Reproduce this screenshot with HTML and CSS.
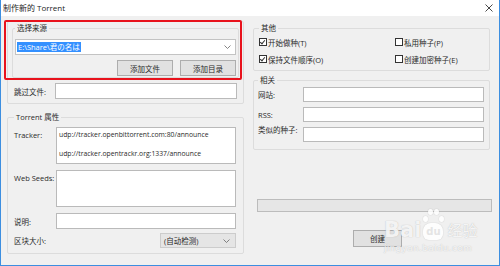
FILE: index.html
```html
<!DOCTYPE html>
<html>
<head>
    <title>制作新的 Torrent</title>
    <link rel="stylesheet" href="styles.css">
</head>
<body>
    <div class="window">
        <div class="titlebar">
            <span class="title">制作新的 Torrent</span>
            <svg class="close" width="8" height="8" viewBox="0 0 8 8"><path d="M0.5 0.5 L7.5 7.5 M7.5 0.5 L0.5 7.5" stroke="#333" stroke-width="0.9"/></svg>
        </div>

        <div class="content">
            <div class="col-left">
                <div class="src-wrap">
                    <fieldset class="group group-src">
                        <legend>选择来源</legend>
                        <div class="combo">
                            <span class="selected">E:\Share\君の名は</span>
                            <svg class="chevron" width="7" height="4" viewBox="0 0 7 4"><path d="M0.5 0.5 L3.5 3.5 L6.5 0.5" fill="none" stroke="#666" stroke-width="0.8"/></svg>
                        </div>
                        <div class="btn-row">
                            <button type="button" class="btn">添加文件</button>
                            <button type="button" class="btn">添加目录</button>
                        </div>
                    </fieldset>
                    <div class="row row-skip">
                        <label>跳过文件:</label>
                        <div class="field"></div>
                    </div>
                </div>

                <fieldset class="group group-torrent">
                    <legend>Torrent 属性</legend>
                    <div class="row row-tracker">
                        <label>Tracker:</label>
                        <div class="field area">
                            <div>udp://tracker.openbittorrent.com:80/announce</div>
                            <div>udp://tracker.opentrackr.org:1337/announce</div>
                        </div>
                    </div>
                    <div class="row row-seeds">
                        <label>Web Seeds:</label>
                        <div class="field area"></div>
                    </div>
                    <div class="row row-desc">
                        <label>说明:</label>
                        <div class="field"></div>
                    </div>
                    <div class="row row-piece">
                        <label>区块大小:</label>
                        <div class="select">
                            <span>(自动检测)</span>
                            <svg class="chevron" width="7" height="4" viewBox="0 0 7 4"><path d="M0.5 0.5 L3.5 3.5 L6.5 0.5" fill="none" stroke="#666" stroke-width="0.8"/></svg>
                        </div>
                    </div>
                </fieldset>
            </div>

            <div class="col-right">
                <fieldset class="group group-other">
                    <legend>其他</legend>
                    <div class="checks">
                        <div class="check"><span class="box checked"></span>开始做种(T)</div>
                        <div class="check"><span class="box"></span>私用种子(P)</div>
                        <div class="check"><span class="box checked"></span>保持文件顺序(O)</div>
                        <div class="check"><span class="box"></span>创建加密种子(E)</div>
                    </div>
                </fieldset>

                <fieldset class="group group-related">
                    <legend>相关</legend>
                    <div class="rel-row">
                        <label>网站:</label>
                        <div class="field"></div>
                    </div>
                    <div class="rel-row">
                        <label>RSS:</label>
                        <div class="field"></div>
                    </div>
                    <div class="rel-row rel-similar">
                        <label>类似的种子:</label>
                        <div class="field"></div>
                    </div>
                </fieldset>

                <div class="progress"></div>
                <button type="button" class="btn btn-create">创建</button>
            </div>
        </div>

        <!-- annotation frame drawn over the source group -->
        <div class="highlight"></div>

        <div class="watermark">
            <div class="wm-logo">
                <span class="wm-bai">Bai</span>
                <span class="wm-paw">
                    <i class="toe t1"></i><i class="toe t2"></i><i class="toe t3"></i><i class="toe t4"></i>
                    <span class="wm-du">du</span>
                </span>
                <span class="wm-jy">经验</span>
            </div>
            <div class="wm-url">jingyan.baidu.com</div>
        </div>
    </div>
</body>
</html>
```

FILE: styles.css
```css
* {
    box-sizing: border-box;
}

body {
    margin: 0;
    font-family: "Open Sans", "Noto Sans CJK SC", sans-serif;
    font-size: 7.5px;
    color: #2a2a2a;
    background-color: #f0f0f0;
}

.window {
    position: relative;
    width: 500px;
    height: 266px;
    background-color: #f0f0f0;
    border-left: 1px solid #3c8ee0;
    border-right: 1px solid #3c8ee0;
    border-bottom: 1px solid #3c8ee0;
    overflow: hidden;
}

.titlebar {
    height: 16px;
    background-color: #fff;
    display: flex;
    align-items: center;
    justify-content: space-between;
    padding: 0 6px 1px 2px;
}

.title {
    font-size: 8px;
    color: #222;
}

.content {
    display: flex;
    gap: 9px;
    padding-left: 6px;
}

/* group boxes */

.group {
    margin: 0;
    border: 1px solid #dcdcdc;
    border-radius: 2px;
    padding: 0;
}

.group legend {
    padding: 0 2px;
    margin-left: 0;
    line-height: 10px;
    height: 10px;
    font-size: 7.5px;
}

.field {
    flex: 1;
    height: 16px;
    background-color: #fff;
    border: 1px solid #bababa;
}

.row {
    display: flex;
    align-items: center;
}

.row label {
    width: 42px;
    flex-shrink: 0;
}

.btn {
    height: 16px;
    width: 56px;
    padding: 0;
    font-family: inherit;
    font-size: 7.5px;
    color: #2a2a2a;
    background-color: #e1e1e1;
    border: 1px solid #adadad;
}

/* left column */

.col-left {
    width: 237px;
    padding-top: 5px;
}

.src-wrap {
    border: 1px solid #dcdcdc;
    border-radius: 2px;
    padding: 1px 4px 4px 4px;
    height: 83px;
}

.group-src {
    height: 55px;
    padding: 6px 2px 0 2px;
}

.combo {
    height: 16px;
    background-color: #fff;
    border: 1px solid #c3c3c3;
    display: flex;
    align-items: center;
    justify-content: space-between;
    padding: 0 4px 0 1px;
}

.selected {
    background-color: #3390ff;
    color: #fff;
    line-height: 10px;
    padding: 0 1px;
}

.btn-row {
    display: flex;
    justify-content: flex-end;
    gap: 7px;
    margin-top: 5px;
}

.row-skip {
    margin-top: 5px;
    padding: 0 2px 0 2px;
}

.row-skip label {
    width: 41px;
}

.group-torrent {
    margin-top: 8px;
    height: 142px;
    padding: 5px 7px 0 6px;
}

.row-tracker,
.row-seeds {
    align-items: flex-start;
}

.row-tracker label,
.row-seeds label {
    padding-top: 3px;
}

.area {
    height: 37px;
}

.row-tracker .area {
    padding: 2px 0 0 2px;
    font-size: 6.8px;
    line-height: 10px;
    display: flex;
    flex-direction: column;
    gap: 9px;
}

.row-seeds {
    margin-top: 6px;
}

.row-desc {
    margin-top: 6px;
}

.row-piece {
    margin-top: 4px;
    justify-content: space-between;
}

.select {
    width: 76px;
    height: 15px;
    background-color: #e5e5e5;
    border: 1px solid #cccccc;
    display: flex;
    align-items: center;
    justify-content: space-between;
    padding: 0 5px 0 3px;
}

/* right column */

.col-right {
    width: 239px;
    padding-top: 7px;
}

.group-other {
    width: 237px;
    height: 48px;
    padding: 3px 5px 0 5px;
}

.checks {
    display: grid;
    grid-template-columns: 136px 1fr;
    row-gap: 5px;
}

.check {
    display: flex;
    align-items: center;
    height: 12px;
    gap: 1px;
}

.box {
    width: 8px;
    height: 8px;
    border: 1px solid #333;
    background-color: #fff;
    position: relative;
}

.box.checked::after {
    content: "";
    position: absolute;
    left: 1px;
    top: 0;
    width: 2px;
    height: 4px;
    border-right: 1px solid #333;
    border-bottom: 1px solid #333;
    transform: rotate(40deg);
}

.group-related {
    width: 237px;
    margin-top: 4px;
    height: 75px;
    padding: 2px 5px 0 4px;
}

.rel-row {
    display: flex;
    align-items: center;
    margin-bottom: 5px;
}

.rel-row label {
    width: 45px;
    flex-shrink: 0;
}

.rel-row .field {
    height: 15px;
}

.rel-similar {
    margin-top: 2px;
    align-items: flex-start;
}

.rel-similar label {
    margin-top: -3px;
}

.progress {
    margin: 49px 0 0 4px;
    width: 235px;
    height: 13px;
    background-color: #e6e6e6;
    border: 1px solid #bcbcbc;
}

.btn-create {
    display: block;
    margin: 18px 0 0 100px;
    width: 49px;
    height: 17px;
}

/* overlays */

.highlight {
    position: absolute;
    left: 3px;
    top: 20px;
    width: 238px;
    height: 60px;
    border: 2px solid #e8121c;
    border-radius: 2px;
}

.watermark {
    position: absolute;
    left: 383px;
    top: 206px;
    color: rgba(255, 255, 255, 0.85);
    text-shadow: 0 0 1px rgba(120, 120, 120, 0.5);
}

.wm-logo {
    display: flex;
    align-items: flex-end;
    height: 34px;
}

.wm-bai {
    font-family: "DejaVu Sans", sans-serif;
    font-size: 21px;
    font-weight: bold;
    line-height: 20px;
}

.wm-paw {
    position: relative;
    width: 22px;
    height: 34px;
    margin-left: 1px;
}

.toe {
    position: absolute;
    width: 5px;
    height: 6px;
    border-radius: 50%;
    background-color: rgba(255, 255, 255, 0.85);
    box-shadow: 0 0 1px rgba(120, 120, 120, 0.5);
}

.t1 { left: 1px; top: 10px; }
.t2 { left: 6px; top: 3px; }
.t3 { left: 12px; top: 3px; }
.t4 { left: 17px; top: 10px; }

.wm-du {
    position: absolute;
    left: 1px;
    bottom: 0;
    width: 20px;
    height: 17px;
    border-radius: 8px 8px 6px 6px;
    background-color: rgba(255, 255, 255, 0.85);
    box-shadow: 0 0 1px rgba(120, 120, 120, 0.5);
    color: #e4e4e4;
    font-family: "DejaVu Sans", sans-serif;
    font-weight: bold;
    font-size: 10px;
    line-height: 17px;
    text-align: center;
    text-shadow: none;
}

.wm-jy {
    font-family: "Noto Sans CJK SC", sans-serif;
    font-size: 15px;
    line-height: 20px;
    margin-left: 3px;
}

.wm-url {
    font-family: "DejaVu Sans", sans-serif;
    font-size: 9px;
    margin-top: 3px;
    letter-spacing: 0.3px;
}
```
